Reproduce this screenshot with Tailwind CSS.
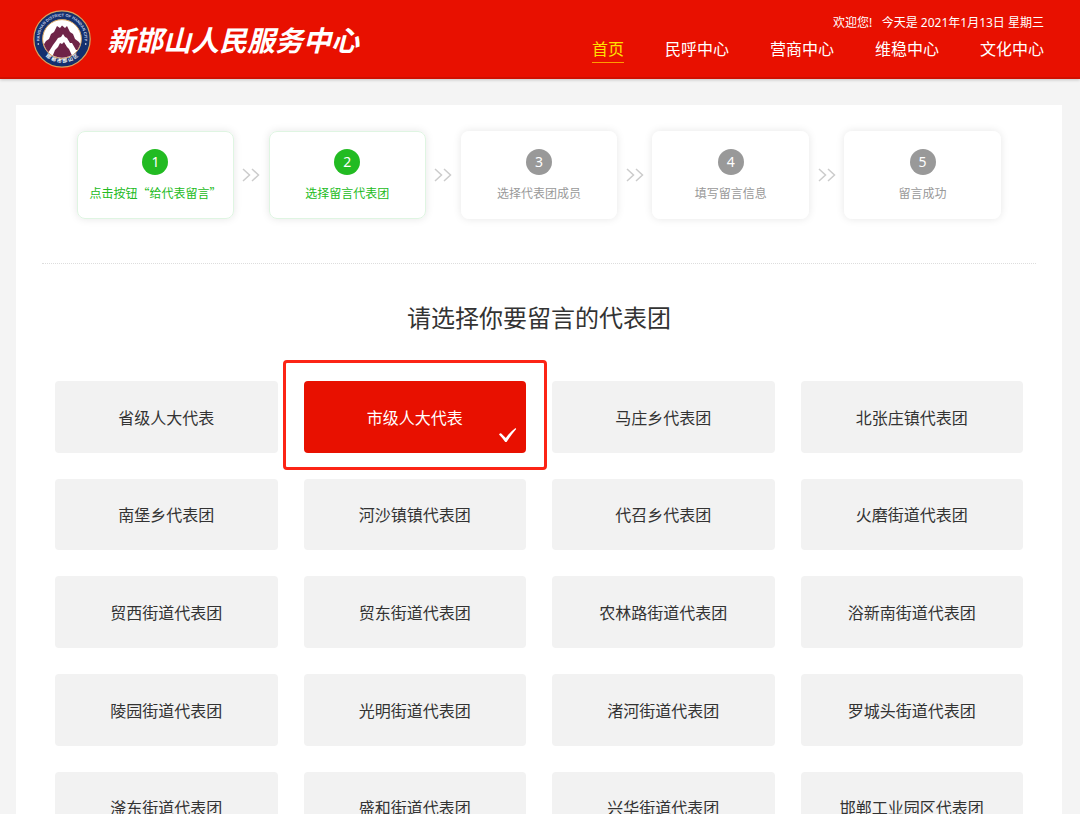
<!DOCTYPE html>
<html lang="zh-CN">
<head>
<meta charset="utf-8">
<meta name="viewport" content="width=device-width, initial-scale=1">
<title>新邯山人民服务中心</title>
<script src="https://cdn.jsdelivr.net/npm/@tailwindcss/browser@4"></script>
</head>
<body class="bg-[#f4f4f4] font-['Noto_Sans_CJK_SC',sans-serif] text-[#333]">
<header class="flex items-center justify-between border-b-2 border-[#d01000] bg-[#e81000] pt-[10px] pb-[9px] pl-[33px] pr-9 text-white shadow-[0_1px_3px_rgba(0,0,0,0.2)]">
  <a href="#" class="flex items-center gap-4">
    <svg class="size-[58px]" viewBox="0 0 58 58" role="img" aria-label="邯山区徽标">
      <defs>
        <path id="arc-top" d="M8.4 38 A22.500 22.500 0 1 1 49.6 38"/>
        <path id="arc-bottom" d="M5.6 34 A24 24 0 0 0 52.4 34"/>
      </defs>
      <circle cx="29" cy="29" r="28.2" fill="#14306e" stroke="#d9a45f" stroke-width="1.2"/>
      <circle cx="29" cy="29" r="19.4" fill="#fff" stroke="#d9a45f" stroke-width="1"/>
      <clipPath id="disc"><circle cx="29" cy="29" r="18.8"/></clipPath>
      <g clip-path="url(#disc)">
        <path d="M8 39 L13 31 L16 29 L18 24 L21 22 L24 16 L27 18 L29 15.5 L32 18 L34 16 L37 22 L40 24 L42 29 L46 32 L50 39 L50 40 L43 40 L39 33 L37 33 L34 28 L32 27 L30 24 L28 27 L25 28 L23 31 L20 35 L15 43 Z" fill="#6f2448"/>
        <path d="M18 50 L22 40 L25 37 L27 33 L29 34 L31 32 L34 37 L36 39 L41 50 Z" fill="#6f2448"/>
      </g>
      <text font-size="4" font-weight="700" fill="#c9d3ea" font-family="Liberation Sans, sans-serif"><textPath href="#arc-top" startOffset="50%" text-anchor="middle">HANSHAN DISTRICT OF HANDAN CITY</textPath></text>
      <text font-size="5" font-weight="700" fill="#fff" font-family="Noto Sans CJK SC, sans-serif"><textPath href="#arc-bottom" startOffset="50%" text-anchor="middle">邯 郸 市 邯 山 区</textPath></text>
      <circle cx="5.3" cy="34" r="0.8" fill="#fff"/><circle cx="52.7" cy="34" r="0.8" fill="#fff"/>
    </svg>
    <span class="text-[28px] leading-10 font-bold italic">新邯山人民服务中心</span>
  </a>
  <div class="flex flex-col items-end gap-[5px] self-start pt-[5px]">
    <p class="font-['Noto_Sans','Noto_Sans_CJK_SC',sans-serif] text-xs leading-4">欢迎您! &nbsp; 今天是 2021年1月13日 星期三</p>
    <nav class="flex gap-[41px] text-base leading-6" aria-label="主导航">
      <a href="#" class="border-b border-[#ff9c00] pb-0.5 text-[#ffe100]" aria-current="page">首页</a>
      <a href="#">民呼中心</a>
      <a href="#">营商中心</a>
      <a href="#">维稳中心</a>
      <a href="#">文化中心</a>
    </nav>
  </div>
</header>

<main class="mt-[26px] mr-[18px] ml-4 bg-white px-[26px] pt-[26px] pb-10">
  <ol class="flex items-center px-[35px] text-xs">
    <li class="flex h-[88px] flex-1 flex-col items-center rounded-lg border border-[#dff5e2] pt-[17px] text-[#22bb22] shadow-[0_0_8px_rgba(0,0,0,0.1)]">
      <span class="flex size-[26px] items-center justify-center rounded-full bg-[#22bb22] font-['Noto_Sans',sans-serif] text-sm text-white">1</span>
      <span class="mt-2 leading-5">点击按钮“给代表留言”</span>
    </li>
    <li class="flex w-[35px] justify-center" aria-hidden="true"><svg class="h-4 w-[18px]" viewBox="0 0 18 16" fill="none" stroke="#ccc" stroke-width="1.5"><path d="M1 2l6.500 6L1 14M10 2l6.500 6L10 14"/></svg></li>
    <li class="flex h-[88px] flex-1 flex-col items-center rounded-lg border border-[#dff5e2] pt-[17px] text-[#22bb22] shadow-[0_0_8px_rgba(0,0,0,0.1)]" aria-current="step">
      <span class="flex size-[26px] items-center justify-center rounded-full bg-[#22bb22] font-['Noto_Sans',sans-serif] text-sm text-white">2</span>
      <span class="mt-2 leading-5">选择留言代表团</span>
    </li>
    <li class="flex w-[35px] justify-center" aria-hidden="true"><svg class="h-4 w-[18px]" viewBox="0 0 18 16" fill="none" stroke="#ccc" stroke-width="1.5"><path d="M1 2l6.500 6L1 14M10 2l6.500 6L10 14"/></svg></li>
    <li class="flex h-[88px] flex-1 flex-col items-center rounded-lg border border-white pt-[17px] text-[#999] shadow-[0_0_8px_rgba(0,0,0,0.1)]">
      <span class="flex size-[26px] items-center justify-center rounded-full bg-[#999] font-['Noto_Sans',sans-serif] text-sm text-white">3</span>
      <span class="mt-2 leading-5">选择代表团成员</span>
    </li>
    <li class="flex w-[35px] justify-center" aria-hidden="true"><svg class="h-4 w-[18px]" viewBox="0 0 18 16" fill="none" stroke="#ccc" stroke-width="1.5"><path d="M1 2l6.500 6L1 14M10 2l6.500 6L10 14"/></svg></li>
    <li class="flex h-[88px] flex-1 flex-col items-center rounded-lg border border-white pt-[17px] text-[#999] shadow-[0_0_8px_rgba(0,0,0,0.1)]">
      <span class="flex size-[26px] items-center justify-center rounded-full bg-[#999] font-['Noto_Sans',sans-serif] text-sm text-white">4</span>
      <span class="mt-2 leading-5">填写留言信息</span>
    </li>
    <li class="flex w-[35px] justify-center" aria-hidden="true"><svg class="h-4 w-[18px]" viewBox="0 0 18 16" fill="none" stroke="#ccc" stroke-width="1.5"><path d="M1 2l6.500 6L1 14M10 2l6.500 6L10 14"/></svg></li>
    <li class="flex h-[88px] flex-1 flex-col items-center rounded-lg border border-white pt-[17px] text-[#999] shadow-[0_0_8px_rgba(0,0,0,0.1)]">
      <span class="flex size-[26px] items-center justify-center rounded-full bg-[#999] font-['Noto_Sans',sans-serif] text-sm text-white">5</span>
      <span class="mt-2 leading-5">留言成功</span>
    </li>
  </ol>
  <hr class="mt-11 border-t border-dotted border-[#ddd]">
  <h1 class="mt-[35px] text-center text-2xl leading-9 font-normal">请选择你要留言的代表团</h1>
  <div class="mt-[46px] grid grid-cols-4 gap-[26px] px-[13px] text-base">
    <button type="button" class="aspect-[444/143] rounded bg-[#f2f2f2]">省级人大代表</button>
    <button type="button" aria-pressed="true" class="relative aspect-[444/143] rounded bg-[#e81000] text-white">市级人大代表
      <svg class="absolute right-2 bottom-2 h-5 w-5" viewBox="0 0 20 20" aria-hidden="true"><path d="M1 9.500 Q2.500 7.500 3.800 9 L7.800 13 Q12 7 17.500 3 L18.200 4 Q13 10 8.600 17 L7.200 17 Q4.500 13 1 9.500Z" fill="#fff"/></svg>
      <span class="pointer-events-none absolute -inset-x-[21px] -top-[21px] -bottom-[17px] rounded-sm border-[3px] border-[#fc2415]"></span>
    </button>
    <button type="button" class="aspect-[444/143] rounded bg-[#f2f2f2]">马庄乡代表团</button>
    <button type="button" class="aspect-[444/143] rounded bg-[#f2f2f2]">北张庄镇代表团</button>
    <button type="button" class="aspect-[444/143] rounded bg-[#f2f2f2]">南堡乡代表团</button>
    <button type="button" class="aspect-[444/143] rounded bg-[#f2f2f2]">河沙镇镇代表团</button>
    <button type="button" class="aspect-[444/143] rounded bg-[#f2f2f2]">代召乡代表团</button>
    <button type="button" class="aspect-[444/143] rounded bg-[#f2f2f2]">火磨街道代表团</button>
    <button type="button" class="aspect-[444/143] rounded bg-[#f2f2f2]">贸西街道代表团</button>
    <button type="button" class="aspect-[444/143] rounded bg-[#f2f2f2]">贸东街道代表团</button>
    <button type="button" class="aspect-[444/143] rounded bg-[#f2f2f2]">农林路街道代表团</button>
    <button type="button" class="aspect-[444/143] rounded bg-[#f2f2f2]">浴新南街道代表团</button>
    <button type="button" class="aspect-[444/143] rounded bg-[#f2f2f2]">陵园街道代表团</button>
    <button type="button" class="aspect-[444/143] rounded bg-[#f2f2f2]">光明街道代表团</button>
    <button type="button" class="aspect-[444/143] rounded bg-[#f2f2f2]">渚河街道代表团</button>
    <button type="button" class="aspect-[444/143] rounded bg-[#f2f2f2]">罗城头街道代表团</button>
    <button type="button" class="aspect-[444/143] rounded bg-[#f2f2f2]">滏东街道代表团</button>
    <button type="button" class="aspect-[444/143] rounded bg-[#f2f2f2]">盛和街道代表团</button>
    <button type="button" class="aspect-[444/143] rounded bg-[#f2f2f2]">兴华街道代表团</button>
    <button type="button" class="aspect-[444/143] rounded bg-[#f2f2f2]">邯郸工业园区代表团</button>
  </div>
</main>
</body>
</html>
